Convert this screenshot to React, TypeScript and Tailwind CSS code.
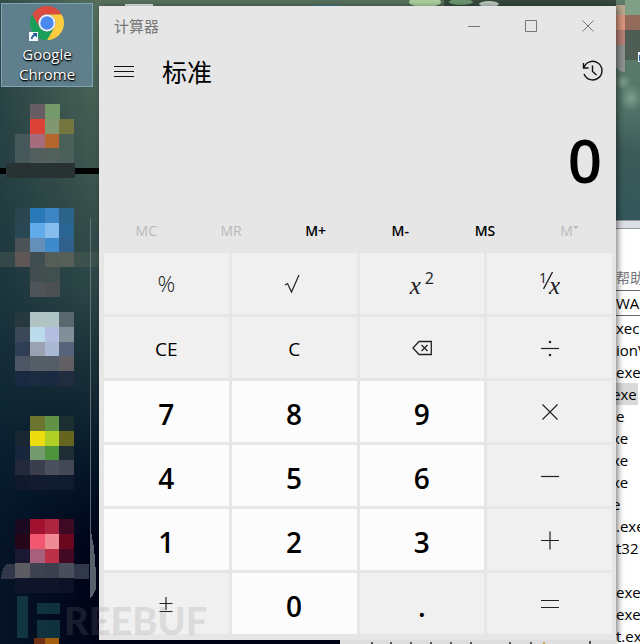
import type { ReactNode } from "react";
import clsx from "clsx";

type Key = {
  label: string;
  kind?: "digit" | "letter" | "op";
  content?: ReactNode;
};

const memoryKeys = [
  { label: "MC", enabled: false },
  { label: "MR", enabled: false },
  { label: "M+", enabled: true },
  { label: "M-", enabled: true },
  { label: "MS", enabled: true },
  { label: "M", enabled: false, menu: true },
];

const keys: Key[] = [
  { label: "%", kind: "op", content: <span className="text-[22px] font-light">%</span> },
  { label: "√", kind: "op", content: <Glyph d="M1 11l2.500-1.500 4 8.500L15 1" /> },
  {
    label: "x²",
    kind: "op",
    content: (
      <span className="flex items-start">
        <i className="pt-1 font-['Liberation_Serif'] text-[25px] leading-6">x</i>
        <span className="pl-1 text-[16px] leading-4">2</span>
      </span>
    ),
  },
  {
    label: "1/x",
    kind: "op",
    content: (
      <span className="flex items-start">
        <span className="text-[14px] leading-4">1</span>
        <svg viewBox="0 0 10 20" className="-mx-1 h-5 w-[10px]" fill="none" stroke="currentColor" strokeWidth="1.4">
          <path d="M0.500 19L9.500 2" />
        </svg>
        <i className="pt-1 font-['Liberation_Serif'] text-[25px] leading-6">x</i>
      </span>
    ),
  },
  { label: "CE", kind: "letter" },
  { label: "C", kind: "letter" },
  { label: "Backspace", kind: "op", content: <BackspaceIcon /> },
  {
    label: "÷",
    kind: "op",
    content: (
      <svg viewBox="0 0 20 20" className="size-5" stroke="currentColor" strokeWidth="1.2">
        <path d="M1 10.5h18" />
        <circle cx="10" cy="4" r="0.7" fill="currentColor" />
        <circle cx="10" cy="17" r="0.7" fill="currentColor" />
      </svg>
    ),
  },
  { label: "7", kind: "digit" },
  { label: "8", kind: "digit" },
  { label: "9", kind: "digit" },
  { label: "×", kind: "op", content: <Glyph d="M2.5 2.5l15 15M17.5 2.5l-15 15" /> },
  { label: "4", kind: "digit" },
  { label: "5", kind: "digit" },
  { label: "6", kind: "digit" },
  { label: "−", kind: "op", content: <Glyph d="M1 10.5h18" /> },
  { label: "1", kind: "digit" },
  { label: "2", kind: "digit" },
  { label: "3", kind: "digit" },
  { label: "+", kind: "op", content: <Glyph d="M1 10.5h18M10 1.5v18" /> },
  { label: "±", kind: "op", content: <Glyph d="M3.5 9.5h13M10 3v13M3.5 17.5h13" /> },
  { label: "0", kind: "digit" },
  { label: ".", kind: "letter", content: <span className="text-[28px] font-semibold">.</span> },
  { label: "=", kind: "op", content: <Glyph d="M1 6.5h18M1 13.5h18" /> },
];

const processes = [
  { name: "xec" },
  { name: "ionV" },
  { name: "exe" },
  { name: "exe", cut: true, selected: true },
  { name: "e" },
  { name: "xe", cut: true },
  { name: "xe", cut: true },
  { name: "xe", cut: true },
  { name: "e", cut: true },
  { name: ".exe" },
  { name: "t32" },
  { name: "" },
  { name: "exe" },
  { name: "exe" },
  { name: "t.exe" },
];

// Pixelated desktop icons: top edge, then rows of four cells
const mosaics = [
  {
    y: 104,
    rows: [
      ["", "#665e63", "#76996c", ""],
      ["", "#db4338", "#82976f", "#74753f"],
      ["#46585a", "#a46c7c", "#b4662d", "#4a6058"],
      ["#46585a", "#525f5d", "#52615b", "#4a6058"],
    ],
  },
  {
    y: 208,
    rows: [
      ["#2c4650", "#2979b8", "#3d85c2", "#2c6389"],
      ["#2a4854", "#61abe8", "#85bdec", "#296492"],
      ["#4c5356", "#638fb8", "#3e8aca", "#30618c"],
      ["#5f5656", "#414e50", "#545d58", "#585f58"],
      ["", "#424d50", "#40504f", ""],
      ["", "#4f5458", "#4c5053", ""],
    ],
  },
  {
    y: 312,
    rows: [
      ["#27383f", "#b2c3c4", "#afc5c5", "#59686f"],
      ["#3b4857", "#bcdbea", "#b4bce0", "#808f98"],
      ["#2f3e54", "#9aa2b1", "#a9b9d4", "#56637a"],
      ["#4b5563", "#565e67", "#555d66", "#625f65"],
      ["#182941", "#1c2b40", "#1b2a41", "#212c3f"],
    ],
  },
  {
    y: 416,
    rows: [
      ["", "#6c7530", "#629247", "#1c2f30"],
      ["#182732", "#ecdc10", "#b0d028", "#66651f"],
      ["#17263c", "#749b70", "#4f943c", "#1f2e35"],
      ["#23283a", "#3b3f4d", "#4c505e", "#434857"],
      ["#101a2c", "#121c2e", "#111c2e", "#101c2e"],
    ],
  },
  {
    y: 519,
    rows: [
      ["#1b0a20", "#a01230", "#ad2540", "#3c0a22"],
      ["#250518", "#f25670", "#f08a94", "#6b0820"],
      ["#191a32", "#a8607c", "#bc3048", "#420a22"],
      ["#5c5c62", "#3f4350", "#3b3f4e", "#4a4d5a"],
      ["#10152a", "#10152a", "#10152a", "#0d1228"],
    ],
  },
];

export default function App() {
  return (
    <main className="relative flex min-h-screen overflow-hidden bg-linear-to-b from-[#566f5c] from-0% via-[#2d4646] via-45% to-[#000318] to-85% font-['Open_Sans','Noto_Sans_CJK_SC',sans-serif]">
      <Desktop />
      <div className="relative z-10 flex min-w-0 flex-1 flex-col">
        <TopStrip />
        <Calculator />
        <BottomStrip />
      </div>
      <BackWindow />
      <Watermark />
    </main>
  );
}

function Desktop() {
  return (
    <aside className="w-[99px] shrink-0 bg-linear-to-r from-[#0b2535]/50 to-transparent pt-[3px]">
      <a
        href="#chrome"
        className="ml-px flex h-[84px] w-[92px] flex-col items-center border border-[#7fa4b4] bg-[#5f7f8c] text-center text-[15px] leading-5 text-white [text-shadow:1px_1px_2px_#000,0_1px_1px_#000]"
      >
        <ChromeIcon />
        <span className="pt-[3px]">
          Google
          <br />
          Chrome
        </span>
      </a>
      <svg viewBox="0 87 99 557" className="block w-[99px]" shapeRendering="crispEdges" aria-hidden="true">
        <rect x="0" y="168" width="99" height="6" fill="#000" />
        <rect x="0" y="252" width="99" height="15" fill="#58645a" opacity="0.35" />
        <path d="M1 579q1-12 6-15h82v15z" fill="#30384a" />
        {mosaics.map((icon) =>
          icon.rows.map((row, r) =>
            row.map(
              (fill, c) =>
                fill && <rect key={`${icon.y}-${r}-${c}`} x={15 + c * 14.8} y={icon.y + r * 14.8} width="15" height="15" fill={fill} />
            )
          )
        )}
        <rect x="6" y="163" width="69" height="15" fill="#293233" />
        <rect x="34" y="638" width="11" height="6" fill="#6f3015" />
        <rect x="45" y="638" width="14" height="6" fill="#a35d0e" />
        <path d="M89.5 219h1.5v312l3 17 2 25v16l-4 8-2.500 2z" fill="#77838a" opacity="0.75" />
      </svg>
    </aside>
  );
}

function TopStrip() {
  return (
    <svg viewBox="0 0 517 6" preserveAspectRatio="none" className="block h-[6px] w-full bg-[#566e5b]" aria-hidden="true">
      <rect x="26" y="4" width="28" height="2" fill="#dfe6e0" />
      <rect x="214" y="5" width="28" height="1" fill="#3d7c94" />
      <path d="M345 0h172v6H345z" fill="#35483c" />
      <ellipse cx="326" cy="2" rx="16" ry="5" fill="#a9cf9c" />
      <ellipse cx="390" cy="4" rx="10" ry="3" fill="#b9c8bb" />
      <ellipse cx="362" cy="2" rx="12" ry="3" fill="#6c9570" />
    </svg>
  );
}

function BottomStrip() {
  return (
    <div className="flex h-1 bg-[#000313]">
      <svg viewBox="0 0 276 4" preserveAspectRatio="none" className="ml-auto h-1 w-[276px] bg-[#dedede]" aria-hidden="true">
        <path d="M32 2v2M51 2v2M71 2v2M91 2v2M111 2v2M131 2v2M170 2v2M191 2v2M250 1v3" stroke="#555" strokeWidth="2" />
        <path d="M204 2v2" stroke="#d3a04a" strokeWidth="2" />
      </svg>
    </div>
  );
}

function Calculator() {
  return (
    <section aria-label="计算器" className="flex flex-1 flex-col bg-[#e6e6e6] pr-1 pb-[6px] pl-[5px] text-black shadow-[2px_1px_6px_rgba(0,0,0,0.5)]">
      <header className="-mr-1 flex h-10 items-center pl-[10px] text-[#777]">
        <h1 className="flex-1 text-[15px]">计算器</h1>
        <WindowButton label="最小化" d="M0 6.500h12" />
        <WindowButton label="最大化" d="M0.500 0.500h11v11h-11z" />
        <WindowButton label="关闭" d="M0.500 0.500l11 11M11.500 0.500l-11 11" />
      </header>

      <div className="flex h-[50px] items-center pr-2 pl-[10px]">
        <button aria-label="菜单">
          <svg viewBox="0 0 20 12" className="h-3 w-5" stroke="#111" shapeRendering="crispEdges">
            <path d="M0 1.500h20M0 6.500h20M0 11.500h20" />
          </svg>
        </button>
        <h2 className="flex-1 pt-px pl-7 text-[25px] leading-8">标准</h2>
        <button aria-label="历史记录">
          <HistoryIcon />
        </button>
      </div>

      <output className="flex h-[112px] items-center justify-end pt-4 pr-[10px] text-[60px] leading-none font-semibold">
        0
      </output>

      <div className="grid h-[45px] grid-cols-6 text-[14px] font-semibold">
        {memoryKeys.map((key) => (
          <button key={key.label} disabled={!key.enabled} className="flex items-center justify-center disabled:font-normal disabled:text-[#b9b9b9]">
            {key.label}
            {key.menu && (
              <svg viewBox="0 0 6 12" className="h-3 w-[6px]" fill="currentColor">
                <path d="M0 1h6L3 4z" />
              </svg>
            )}
          </button>
        ))}
      </div>

      <div className="grid flex-1 auto-rows-[minmax(61px,1fr)] grid-cols-4 gap-[3px]">
        {keys.map((key) => (
          <button
            key={key.label}
            aria-label={key.label}
            className={clsx(
              "flex items-center justify-center",
              key.kind === "digit" ? "bg-[#fcfcfc] pt-1 text-[28px] font-semibold" : "bg-[#f0f0f0]",
              key.kind === "letter" && "pt-1 text-[19px]",
              key.kind === "op" && "text-[#222]"
            )}
          >
            {key.content ?? key.label}
          </button>
        ))}
      </div>
    </section>
  );
}

function WindowButton({ label, d }: { label: string; d: string }) {
  return (
    <button aria-label={label} className="flex h-10 w-[57px] items-center justify-center">
      <svg viewBox="0 0 12 12" className="size-3" fill="none" stroke="currentColor">
        <path d={d} />
      </svg>
    </button>
  );
}

function Glyph({ d }: { d: string }) {
  return (
    <svg viewBox="0 0 20 20" className="size-5" fill="none" stroke="currentColor" strokeWidth="1.2">
      <path d={d} />
    </svg>
  );
}

function BackspaceIcon() {
  return (
    <svg viewBox="0 0 20 16" className="h-4 w-5" fill="none" stroke="currentColor" strokeWidth="1.3">
      <path d="M7 1.500h12.300v13H7L1 8z" />
      <path d="M9.500 5l6 6M15.500 5l-6 6" />
    </svg>
  );
}

function HistoryIcon() {
  return (
    <svg viewBox="0 0 22 22" className="size-[22px]" fill="none" stroke="#111" strokeWidth="1.4">
      <path d="M1.500 3v5h5" />
      <path d="M1.800 7.800A9.300 9.300 0 1 1 2 14" />
      <path d="M10.500 5.500v6l4 3.500" />
    </svg>
  );
}

function ChromeIcon() {
  return (
    <svg viewBox="0 0 36 36" className="mt-px size-9 shrink-0" aria-hidden="true">
      <path d="M3.300 9.500A17 17 0 0 1 32.700 9.500H18z" fill="#dd4b3e" />
      <path d="M32.700 9.500A17 17 0 0 1 18 35l7.400-12.700A8.500 8.500 0 0 0 18 9.500z" fill="#fdcd40" />
      <path d="M3.300 9.500A17 17 0 0 0 18 35l7.400-12.700A8.500 8.500 0 0 1 10.600 22.300z" fill="#1a9f5b" />
      <path d="M3.300 9.500L10.600 22.300A8.500 8.500 0 0 1 18 9.500z" fill="#dd4b3e" />
      <circle cx="18" cy="18" r="8.500" fill="#f4f4f4" />
      <circle cx="18" cy="18" r="6.700" fill="#4a89ef" />
      <path d="M0 27h9v9H0z" fill="#f4f6f8" />
      <path d="M2 34q0-4 3-4.500l-1.500-1.500H8v4.500L6.500 31Q4 31 3.500 34z" fill="#205a9c" />
    </svg>
  );
}

function BackWindow() {
  return (
    <div className="flex w-6 shrink-0 flex-col overflow-hidden text-[15px] whitespace-nowrap text-black">
      <svg viewBox="0 0 24 220" className="block h-[220px] w-6 shrink-0" aria-hidden="true">
        <defs>
          <linearGradient id="foliage" x1="0" y1="0" x2="0" y2="1">
            <stop offset="0" stopColor="#5f7d69" />
            <stop offset="0.450" stopColor="#56776b" />
            <stop offset="0.700" stopColor="#3c5b59" />
            <stop offset="1" stopColor="#33575b" />
          </linearGradient>
          <radialGradient id="leaf">
            <stop offset="0" stopColor="#86a892" stopOpacity="0.8" />
            <stop offset="1" stopColor="#86a892" stopOpacity="0" />
          </radialGradient>
        </defs>
        <path d="M0 0h24v220H0z" fill="url(#foliage)" />
        <ellipse cx="15" cy="98" rx="11" ry="14" fill="url(#leaf)" />
        <ellipse cx="7" cy="82" rx="8" ry="8" fill="url(#leaf)" />
        <path d="M0 5h9v10H0z" fill="#b9a68d" />
        <path d="M9 0h15v15H9z" fill="#7fa085" />
        <path d="M0 15h9v15H0z" fill="#d9957f" />
        <path d="M9 15h15v15H9z" fill="#946b5a" />
        <path d="M0 30h9v15H0z" fill="#b58077" />
        <path d="M9 30h15v30H9z" fill="#4d5d53" />
        <path d="M0 45h9v27q-6 0-9-5z" fill="#8f9191" />
        <path d="M22 52h2v10h-2z" fill="#eef4fa" />
        <path d="M23 55h1v6h-1z" fill="#2b63a8" />
      </svg>
      <div className="h-2 shrink-0 border-t border-[#999] bg-[#dcdfe4]" />
      <div className="flex h-[62px] shrink-0 items-end border-t border-[#999] bg-white pb-[2px] text-[14px] text-[#777]">帮助</div>
      <div className="h-[26px] shrink-0 border-y border-[#666] bg-white leading-6">WAR</div>
      <ul className="flex-[1_1_0px] overflow-hidden bg-white pt-px">
        {processes.map((process, i) => (
          <li key={i} className={clsx("h-[22px] leading-[22px]", process.selected && "mr-[2px] bg-[#d9d9d9]")}>
            <span className={clsx(process.cut && "-ml-1")}>{process.name}</span>
          </li>
        ))}
      </ul>
    </div>
  );
}

function Watermark() {
  return (
    <div className="pointer-events-none absolute bottom-[6px] left-[17px] z-20 flex items-end gap-1">
      <svg viewBox="0 0 43 42" className="h-[42px] w-[43px]" fill="#2f8a86" opacity="0.3" aria-hidden="true">
        <path d="M0 0h11v42H0zM20 7h23v11H20zM20 24h23v18H20z" />
      </svg>
      <span className="font-['Lato',sans-serif] text-[38px] leading-9 font-black text-[#808080]/20">REEBUF</span>
    </div>
  );
}
